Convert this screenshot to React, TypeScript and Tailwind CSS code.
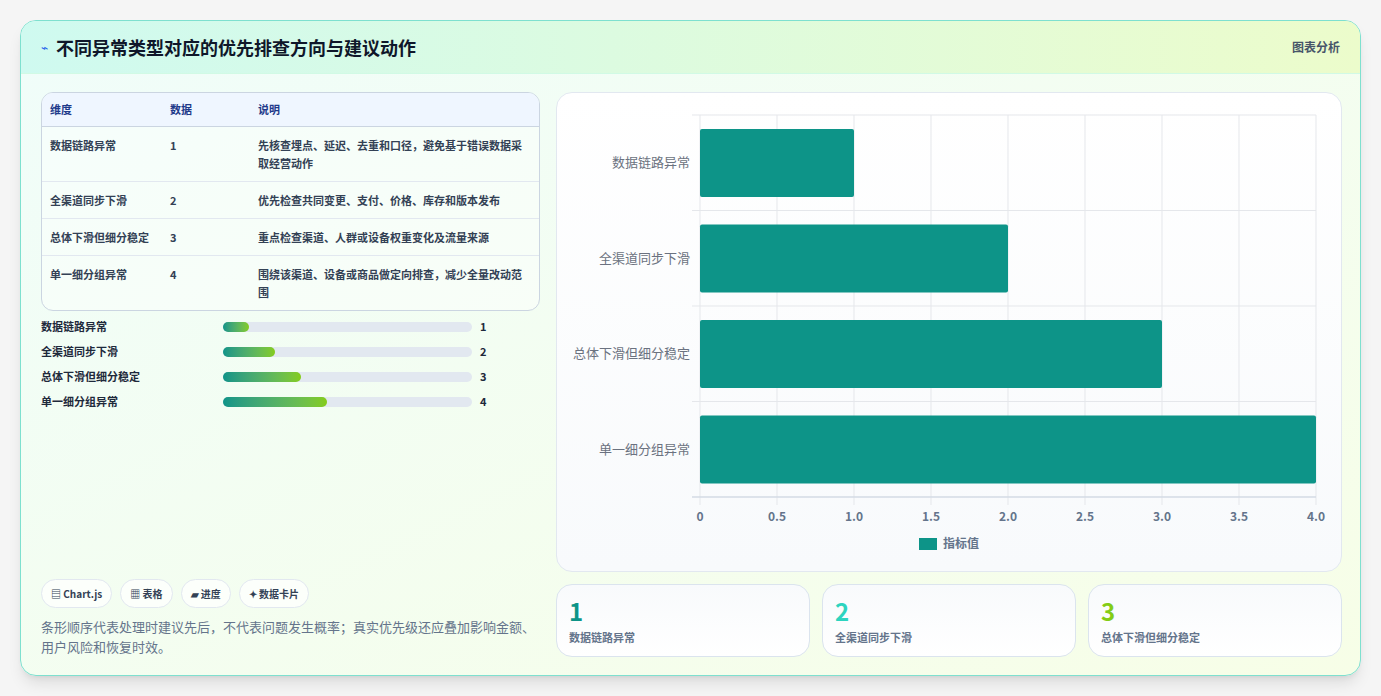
const rows = [
  { name: '数据链路异常', value: 1, note: '先核查埋点、延迟、去重和口径，避免基于错误数据采取经营动作' },
  { name: '全渠道同步下滑', value: 2, note: '优先检查共同变更、支付、价格、库存和版本发布' },
  { name: '总体下滑但细分稳定', value: 3, note: '重点检查渠道、人群或设备权重变化及流量来源' },
  { name: '单一细分组异常', value: 4, note: '围绕该渠道、设备或商品做定向排查，减少全量改动范围' },
];

const font = { fontFamily: '"Noto Sans CJK SC", "Noto Sans", sans-serif' };

function BarChart() {
  const x0 = 143;
  const w = 616;
  const top = 22;
  const rowH = 95.5;
  const ticks = [0, 0.5, 1, 1.5, 2, 2.5, 3, 3.5, 4];
  return (
    <svg width="784" height="478" className="block">
      {ticks.map((t) => (
        <line key={t} x1={x0 + (t / 4) * w} x2={x0 + (t / 4) * w} y1={top} y2={top + rowH * 4 + 8} stroke="#e5e7eb" />
      ))}
      {[0, 1, 2, 3, 4].map((i) => (
        <line key={i} x1={x0 - 8} x2={x0 + w} y1={top + i * rowH} y2={top + i * rowH} stroke="#e5e7eb" />
      ))}
      <line x1={x0 - 8} x2={x0 + w} y1={top + rowH * 4} y2={top + rowH * 4} stroke="#cbd5e1" />
      {rows.map((r, i) => (
        <g key={r.name}>
          <rect x={x0} y={top + i * rowH + 14} width={(r.value / 4) * w} height={68} fill="#0d9488" rx="2" />
          <text x={x0 - 10} y={top + i * rowH + 52} textAnchor="end" fontSize="13" fill="#6b7280">
            {r.name}
          </text>
        </g>
      ))}
      {ticks.map((t) => (
        <text key={t} x={x0 + (t / 4) * w} y={428} textAnchor="middle" fontSize="12" fontWeight="700" fill="#64748b">
          {t === 0 ? '0' : t.toFixed(1)}
        </text>
      ))}
      <rect x={362} y={445} width={18} height={12} fill="#0d9488" />
      <text x={386} y={455} fontSize="12" fontWeight="700" fill="#64748b">指标值</text>
    </svg>
  );
}

export default function App() {
  const colors = ['text-[#0d9488]', 'text-[#2dd4bf]', 'text-[#84cc16]'];
  return (
    <div className="min-h-[696px] bg-[#f5f5f5] p-5" style={font}>
      <div className="flex h-[656px] flex-col overflow-hidden rounded-2xl border border-[#7ee0cf] bg-gradient-to-br from-[#f0fdfa] to-[#f7fee7] shadow-lg">
        <div className="flex h-[55px] items-center justify-between border-b border-[#d1fae5] bg-gradient-to-r from-[#cffaf0] to-[#ecfccb] px-5">
          <div className="flex items-center gap-2">
            <span className="text-xs text-[#2563eb]">⌁</span>
            <h1 className="text-lg font-bold text-[#0f172a]">不同异常类型对应的优先排查方向与建议动作</h1>
          </div>
          <span className="text-xs font-bold text-[#475569]">图表分析</span>
        </div>
        <div className="flex flex-1 gap-4 p-[18px] pl-5 pr-[18px]">
          <div className="flex w-[501px] flex-col">
            <div className="overflow-hidden rounded-xl border border-[#cbd5e1] bg-white/40">
              <table className="w-full text-left text-[11px] font-bold text-[#334155]">
                <thead className="bg-[#eff6ff] text-[#1e3a8a]">
                  <tr className="border-b border-[#cbd5e1]">
                    <th className="h-[33px] w-[120px] px-2">维度</th>
                    <th className="w-[88px] px-2">数据</th>
                    <th className="px-2">说明</th>
                  </tr>
                </thead>
                <tbody className="divide-y divide-[#e2e8f0]">
                  {rows.map((r) => (
                    <tr key={r.name} className="align-top">
                      <td className="px-2 py-[9px] leading-[18px]">{r.name}</td>
                      <td className="px-2 py-[9px] leading-[18px]">{r.value}</td>
                      <td className="px-2 py-[9px] pr-3 leading-[18px]">{r.note}</td>
                    </tr>
                  ))}
                </tbody>
              </table>
            </div>
            <div className="mt-[10px] flex flex-col gap-[13px]">
              {rows.map((r) => (
                <div key={r.name} className="flex h-3 items-center text-[11px] font-bold text-[#1e293b]">
                  <span className="w-[182px]">{r.name}</span>
                  <div className="h-[10px] w-[249px] rounded-full bg-[#e2e8f0]">
                    <div
                      className="h-full rounded-full bg-gradient-to-r from-[#0d9488] to-[#84cc16]"
                      style={{ width: `${r.value * 26 + (r.value === 1 ? 0 : 0)}px` }}
                    />
                  </div>
                  <span className="ml-2 text-[11px]">{r.value}</span>
                </div>
              ))}
            </div>
            <div className="mt-auto flex gap-2">
              {['▤ Chart.js', '▦ 表格', '▰ 进度', '✦ 数据卡片'].map((c) => (
                <span key={c} className="rounded-full border border-[#e2e8f0] bg-white/70 px-[9px] py-[6px] text-[10px] font-bold text-[#334155]">
                  {c}
                </span>
              ))}
            </div>
            <p className="mt-[9px] text-[13px] leading-[20px] text-[#64748b]">
              条形顺序代表处理时建议先后，不代表问题发生概率；真实优先级还应叠加影响金额、用户风险和恢复时效。
            </p>
          </div>
          <div className="flex flex-1 flex-col gap-3">
            <div className="h-[480px] rounded-2xl border border-[#e2e8f0] bg-gradient-to-b from-white to-[#f8fafc]">
              <BarChart />
            </div>
            <div className="grid grid-cols-3 gap-3">
              {rows.slice(0, 3).map((r, i) => (
                <div key={r.name} className="h-[73px] rounded-2xl border border-[#dbe4ee] bg-gradient-to-b from-[#f8fafc] to-white px-3 pt-[12px]">
                  <div className={`text-2xl font-bold leading-7 ${colors[i]}`}>{r.value}</div>
                  <div className="mt-1 text-[11px] font-bold text-[#64748b]">{r.name}</div>
                </div>
              ))}
            </div>
          </div>
        </div>
      </div>
    </div>
  );
}
